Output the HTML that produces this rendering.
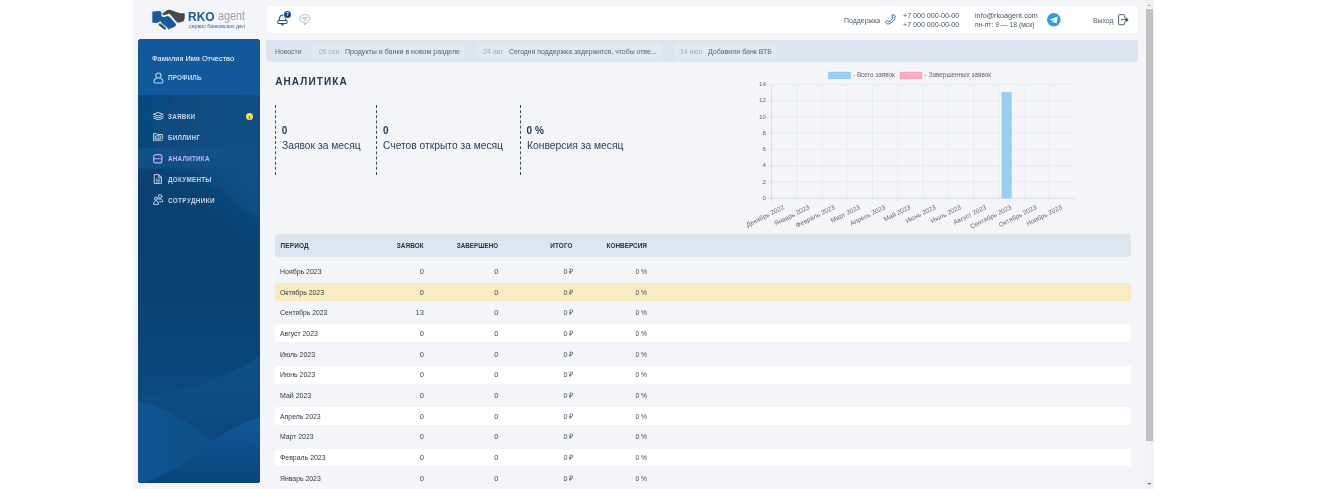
<!DOCTYPE html>
<html lang="ru"><head><meta charset="utf-8"><title>RKO agent — Аналитика</title>
<style>
*{margin:0;padding:0;box-sizing:border-box}
html,body{width:1340px;height:489px;overflow:hidden;background:#fff}
body{font-family:"Liberation Sans",sans-serif;position:relative}
.t{position:absolute;white-space:nowrap}
.a{position:absolute}
.bg{left:133.2px;top:0;width:1012.3px;height:489px;background:#f3f5f8}
.topbar{left:267px;top:6px;width:871.4px;height:26.8px;background:#fff;border-radius:2.5px}
.news{left:266.3px;top:39.8px;width:872.1px;height:22.7px;background:#dce4ed;border-radius:3px}
.pill{top:43.5px;height:15px;background:#e1e8ef;border:1px solid #e5ebf1;border-radius:2.5px}
.side{left:138.1px;top:39.1px;width:122.3px;height:444px;border-radius:3.5px;overflow:hidden;background:#0d4a80}
.th{left:274.9px;top:234.3px;width:855.7px;height:22.5px;background:#dde5ee;border-radius:3px}
.row{left:274.9px;width:855.7px;height:17.9px;border-radius:2px}
.dash{top:105px;width:0;height:69.5px;border-left:1px dashed #3a4c66}
.sb{left:1145.2px;top:0;width:8.5px;height:489px;background:#f1f1f1}
.thumb{left:1146.1px;top:8.9px;width:6.8px;height:432.3px;background:#c1c1c1}
svg{position:absolute;overflow:visible}
.txt{position:absolute;left:0;top:0;width:1340px;height:489px;will-change:transform}
</style></head>
<body>
<div class="a bg"></div>
<div class="a sb"></div>
<div class="a thumb"></div>
<svg style="left:1145.2px;top:0" width="8.5" height="489" viewBox="0 0 8.5 489"><path d="M2.9 5.9 L4.25 4.4 L5.6 5.9Z" fill="#8c8c8c"/><path d="M2.7 482.9 L4.25 484.7 L5.8 482.9Z" fill="#505050"/></svg>
<div class="a topbar"></div>
<div class="a news"></div>
<div class="a pill" style="left:312.5px;width:151.3px"></div>
<div class="a pill" style="left:476.9px;width:185.6px"></div>
<div class="a pill" style="left:675px;width:101px"></div>

<!-- sidebar -->
<div class="a side">
<svg style="left:0;top:0" width="122.3" height="444" viewBox="0 0 122.3 444" preserveAspectRatio="none">
<defs>
<linearGradient id="g1" x1="0" y1="0" x2="0" y2="1"><stop offset="0" stop-color="#0c4679"/><stop offset="0.35" stop-color="#0b4172"/><stop offset="0.6" stop-color="#0b4273"/><stop offset="0.8" stop-color="#0c497f"/><stop offset="1" stop-color="#0c497f"/></linearGradient>
<linearGradient id="g2" x1="0" y1="0" x2="1" y2="0.6"><stop offset="0" stop-color="#0f5189" stop-opacity=".25"/><stop offset="1" stop-color="#115892" stop-opacity=".75"/></linearGradient>
<linearGradient id="g3" gradientUnits="userSpaceOnUse" x1="0" y1="330" x2="0" y2="405"><stop offset="0" stop-color="#0e4f88"/><stop offset="1" stop-color="#0b467b"/></linearGradient>
<linearGradient id="g4" gradientUnits="userSpaceOnUse" x1="0" y1="0" x2="75" y2="0"><stop offset="0" stop-color="#0e5591"/><stop offset="1" stop-color="#0d4f89"/></linearGradient>
<linearGradient id="g6" gradientUnits="userSpaceOnUse" x1="0" y1="380" x2="0" y2="444"><stop offset="0" stop-color="#10599a"/><stop offset="1" stop-color="#0a4478"/></linearGradient>
<linearGradient id="g5" x1="0" y1="0" x2="1" y2="0"><stop offset="0" stop-color="#1a68ab" stop-opacity=".35"/><stop offset="1" stop-color="#1a68ab" stop-opacity="0"/></linearGradient>
<filter id="bl" x="-50%" y="-50%" width="200%" height="200%"><feGaussianBlur stdDeviation="14"/></filter>
</defs>
<rect x="0" y="0" width="122.3" height="444" fill="url(#g1)"/>
<path d="M-30 30 H160 V200 C100 180 50 110 -30 95Z" fill="url(#g2)" filter="url(#bl)"/>
<path d="M0 358 C40 356 85 341 122.3 317 V444 H0Z" fill="url(#g3)"/>
<path d="M0 362 C28 368 55 386 74.4 402.9 C55 419 35 433 11.7 442.1 L0 444Z" fill="url(#g4)"/>
<path d="M11.7 442.1 C39 430 56 416 74.4 402.9 C92 390 106 383 122.3 379 V444 H0Z" fill="url(#g6)"/>
<rect x="0" y="108.6" width="122.3" height="21" fill="url(#g5)"/>
<rect x="0" y="0" width="122.3" height="56" fill="#12599b"/>
</svg>
</div>

<!-- logo handshake -->
<svg style="left:151px;top:9px" width="35" height="22" viewBox="0 0 35 22">
<path d="M1.3 3.2 Q1.3 2.6 2 2.6 L8.6 2 Q10 2.2 10.6 4 Q10 6.6 11 7.4 Q12.6 8.6 14.4 7.8 L16.8 6.7 L19.9 9.3 L25.1 15.3 Q25 17 23.6 17.8 L17.1 20.5 L16.2 18.5 L11.3 14.8 L9.3 12.2 L6.2 13.9 L1.8 13.7 Q1.3 13.6 1.3 13Z" fill="#155c9e"/>
<path d="M11.4 4.6 L16.5 1.1 Q18 0.6 19.9 0.9 L24.5 2.7 L29.1 4.2 L33 4.3 Q33.8 4.4 33.8 5.4 Q34 9 32.9 12 L29.1 13.6 L26.2 13.6 L23.9 11 L20.5 6.7 L18.2 4.4 L15.9 5.6 L13 6.3 Q11.4 6.2 11.4 4.6Z" fill="#48474c" stroke="#f3f5f8" stroke-width=".7" paint-order="stroke"/>
<path d="M8.9 15.5 L13.7 19.4" stroke="#48474c" stroke-width="2.5" stroke-linecap="round" fill="none"/>
</svg>

<!-- sidebar icons -->
<svg style="left:152.7px;top:71.6px" width="10.9" height="12" viewBox="0 0 10.9 12" fill="none" stroke="#b9d7f2" stroke-width="1.05" stroke-linecap="round" stroke-linejoin="round">
<circle cx="5.45" cy="3.5" r="2.6"/><path d="M3.3 6.3 C1.6 7 0.8 8.2 0.8 9.6 C0.8 10.6 1.5 11 2.4 11 H8.5 C9.4 11 10.1 10.6 10.1 9.6 C10.1 8.2 9.3 7 7.6 6.3"/>
</svg>
<!-- ЗАЯВКИ: layers -->
<svg style="left:152.5px;top:112.1px" width="10.8" height="8.4" viewBox="0 0 10.8 8.4" fill="none" stroke="#c3d5ea" stroke-width="1" stroke-linejoin="round" stroke-linecap="round">
<path d="M5.4 0.6 L10.1 2.3 L5.4 4 L0.7 2.3Z"/><path d="M0.7 4.2 L5.4 5.9 L10.1 4.2"/><path d="M0.7 6.1 L5.4 7.8 L10.1 6.1"/>
</svg>
<!-- БИЛЛИНГ -->
<svg style="left:152.9px;top:133.3px" width="10" height="7.8" viewBox="0 0 10 7.8" fill="none" stroke="#c3d5ea" stroke-width="1" stroke-linejoin="round" stroke-linecap="round">
<path d="M0.6 7.2 V0.6 H3.4 L4.2 1.5 H9.4 V5.6"/><path d="M0.6 7.2 H9.4"/><rect x="2.7" y="2.9" width="4.6" height="2.9"/><circle cx="5" cy="4.35" r=".5" fill="#c3d5ea" stroke="none"/>
</svg>
<!-- АНАЛИТИКА -->
<svg style="left:153.1px;top:153.5px" width="9.6" height="9.6" viewBox="0 0 9.6 9.6" fill="none" stroke="#bdb0f5" stroke-width="1.15" stroke-linejoin="round" stroke-linecap="round">
<rect x="0.7" y="0.7" width="8.2" height="8.2" rx="2"/><path d="M0.7 4.8 H8.9"/>
</svg>
<!-- ДОКУМЕНТЫ -->
<svg style="left:154.1px;top:174.1px" width="8" height="10" viewBox="0 0 8 10" fill="none" stroke="#c3d5ea" stroke-width="1" stroke-linejoin="round" stroke-linecap="round">
<path d="M0.6 0.6 H4.8 L7.4 3.2 V9.4 H0.6Z"/><path d="M4.7 0.8 V3.3 H7.2"/><path d="M2.2 5 H5.8 M2.2 6.5 H5.8 M2.2 8 H5.8" stroke-width=".7"/>
</svg>
<!-- СОТРУДНИКИ -->
<svg style="left:152.8px;top:194.3px" width="10.4" height="10.6" viewBox="0 0 10.4 10.6" fill="none" stroke="#c3d5ea" stroke-width="1" stroke-linejoin="round" stroke-linecap="round">
<circle cx="7.1" cy="2.4" r="1.8"/><circle cx="3" cy="4.6" r="1.5"/><path d="M0.6 9.9 C0.6 7.6 1.6 6.7 3 6.7 C4.4 6.7 5.4 7.6 5.4 9.9Z"/><path d="M5.6 5 C7.8 4.4 9.8 5.4 9.8 7.8 H6.4"/>
</svg>
<div class="a" style="left:245.9px;top:113.2px;width:7.2px;height:7.2px;border-radius:50%;background:#f4e44c"></div>

<!-- topbar icons: bell -->
<svg style="left:276.6px;top:13.6px" width="12" height="12" viewBox="0 0 12 12" fill="none" stroke="#1e4f86" stroke-width="1.05" stroke-linejoin="round" stroke-linecap="round">
<path d="M2.2 6.2 C2.6 5 2.5 4.2 2.7 3.4 C3 1.6 4.2 0.9 5.4 0.9 C6.6 0.9 7.8 1.6 8.1 3.4 C8.3 4.2 8.2 5 8.6 6.2"/>
<rect x="0.8" y="6.5" width="9.3" height="2.9" rx="1.1"/>
<path d="M4.5 10.5 C4.9 11.2 5.9 11.2 6.3 10.5" stroke-width="1.2"/>
</svg>
<div class="a" style="left:283.7px;top:10.5px;width:7.6px;height:7.6px;border-radius:50%;background:#184b85;box-shadow:0 0 0 .7px #fff"></div>
<!-- chat -->
<svg style="left:299.2px;top:14.2px" width="12" height="12" viewBox="0 0 12 12" fill="none" stroke="#a4abb4" stroke-width=".8" stroke-linejoin="round" stroke-linecap="round">
<path d="M5.3 8.5 C2.4 8.4 0.7 6.6 0.7 4.5 C0.7 2.3 2.8 0.6 5.8 0.6 C8.8 0.6 10.9 2.3 10.9 4.5 C10.9 5.8 10.2 7 9 7.8 L5.8 10.7 Z"/>
<path d="M3.3 3.6 H8.5 M4.2 4.9 H7.6 M5.1 6.2 H6.7" stroke-width=".7"/>
</svg>
<!-- phone -->
<svg style="left:885px;top:14.2px" width="11.2" height="10.8" viewBox="0 0 22 21" fill="none" stroke="#2f6192" stroke-width="1.75" stroke-linejoin="round" stroke-linecap="round">
<path d="M15.4 1.6 C17.4 0.8 19.8 2.2 20.2 4.2 C19.6 10.8 15 16.6 8.6 19 C6 20 3 19.6 1.8 17.4 C1 15.6 2 13.6 4 13.4 C5.6 13.2 6.8 14 7.4 15.2 C11.6 13.4 14.4 10.2 15.8 6.4 C14.4 6 13.4 4.8 13.6 3.4 C13.8 2.4 14.4 1.8 15.4 1.6Z"/>
</svg>
<!-- telegram -->
<svg style="left:1047px;top:13px" width="13.6" height="13.6" viewBox="0 0 27 27">
<circle cx="13.5" cy="13.5" r="13.5" fill="#2d9fd9"/><path d="M5.6 13.2 L20.4 7.4 C21.2 7.1 21.7 7.6 21.5 8.5 L19 20 C18.8 20.8 18.2 21 17.6 20.6 L13.8 17.8 L11.9 19.6 C11.6 19.9 11.2 19.8 11.2 19.3 L11.5 16 L18 10.2 L10 15.2 L6 14 C5.2 13.8 5.1 13.4 5.6 13.2Z" fill="#fff"/>
</svg>
<!-- logout -->
<svg style="left:1117.6px;top:14.2px" width="10.8" height="11.4" viewBox="0 0 22 23" fill="none" stroke="#35516f" stroke-width="1.9" stroke-linejoin="round" stroke-linecap="round">
<path d="M13.4 6.6 V3 C13.4 1.8 12.8 1.2 11.6 1.2 H3 C1.8 1.2 1.2 1.8 1.2 3 V20 C1.2 21.2 1.8 21.8 3 21.8 H11.6 C12.8 21.8 13.4 21.2 13.4 20 V16.4"/><path d="M6.6 11.5 H17"/><path d="M16.6 7.8 L20.8 11.5 L16.6 15.2Z" fill="#35516f"/>
</svg>

<!-- stats dashes -->
<div class="a dash" style="left:274.8px"></div>
<div class="a dash" style="left:376.3px"></div>
<div class="a dash" style="left:519.5px"></div>

<!-- table -->
<div class="a th"></div>
<div class="a row" style="top:282.7px;background:#f9ecc1"></div>
<div class="a row" style="top:324.4px;background:#fff"></div>
<div class="a row" style="top:365.8px;background:#fff"></div>
<div class="a row" style="top:407.1px;background:#fff"></div>
<div class="a row" style="top:448.5px;background:#fff"></div>
<svg style="left:0;top:0;will-change:transform" width="1340" height="489" viewBox="0 0 1340 489" font-family="Liberation Sans, sans-serif">
<rect x="828.5" y="72.1" width="21.8" height="6.7" fill="#9bcdf2" stroke="#7fbdec" stroke-width=".5"/>
<rect x="900" y="72.1" width="21.8" height="6.7" fill="#f9adbf" stroke="#f58fa8" stroke-width=".5"/>
<text x="853" y="77.2" font-size="6.35" fill="#666">- Всего заявок</text>
<text x="924.8" y="77.2" font-size="6.35" fill="#666">- Завершенных заявок</text>
<path d="M767.5 84.50 H1074.6" stroke="#dfe2e6" stroke-width=".5" fill="none"/>
<text x="765.9" y="86.20" font-size="6.2" fill="#666" text-anchor="end">14</text>
<path d="M767.5 100.73 H1074.6" stroke="#dfe2e6" stroke-width=".5" fill="none"/>
<text x="765.9" y="102.43" font-size="6.2" fill="#666" text-anchor="end">12</text>
<path d="M767.5 116.96 H1074.6" stroke="#dfe2e6" stroke-width=".5" fill="none"/>
<text x="765.9" y="118.66" font-size="6.2" fill="#666" text-anchor="end">10</text>
<path d="M767.5 133.19 H1074.6" stroke="#dfe2e6" stroke-width=".5" fill="none"/>
<text x="765.9" y="134.89" font-size="6.2" fill="#666" text-anchor="end">8</text>
<path d="M767.5 149.41 H1074.6" stroke="#dfe2e6" stroke-width=".5" fill="none"/>
<text x="765.9" y="151.11" font-size="6.2" fill="#666" text-anchor="end">6</text>
<path d="M767.5 165.64 H1074.6" stroke="#dfe2e6" stroke-width=".5" fill="none"/>
<text x="765.9" y="167.34" font-size="6.2" fill="#666" text-anchor="end">4</text>
<path d="M767.5 181.87 H1074.6" stroke="#dfe2e6" stroke-width=".5" fill="none"/>
<text x="765.9" y="183.57" font-size="6.2" fill="#666" text-anchor="end">2</text>
<path d="M767.5 198.10 H1074.6" stroke="#c2c5c9" stroke-width=".5" fill="none"/>
<text x="765.9" y="199.80" font-size="6.2" fill="#666" text-anchor="end">0</text>
<path d="M771.50 84.5 V201.7" stroke="#c2c5c9" stroke-width=".5" fill="none"/>
<path d="M796.76 84.5 V201.7" stroke="#dfe2e6" stroke-width=".5" fill="none"/>
<path d="M822.02 84.5 V201.7" stroke="#dfe2e6" stroke-width=".5" fill="none"/>
<path d="M847.28 84.5 V201.7" stroke="#dfe2e6" stroke-width=".5" fill="none"/>
<path d="M872.54 84.5 V201.7" stroke="#dfe2e6" stroke-width=".5" fill="none"/>
<path d="M897.80 84.5 V201.7" stroke="#dfe2e6" stroke-width=".5" fill="none"/>
<path d="M923.06 84.5 V201.7" stroke="#dfe2e6" stroke-width=".5" fill="none"/>
<path d="M948.32 84.5 V201.7" stroke="#dfe2e6" stroke-width=".5" fill="none"/>
<path d="M973.58 84.5 V201.7" stroke="#dfe2e6" stroke-width=".5" fill="none"/>
<path d="M998.84 84.5 V201.7" stroke="#dfe2e6" stroke-width=".5" fill="none"/>
<path d="M1024.10 84.5 V201.7" stroke="#dfe2e6" stroke-width=".5" fill="none"/>
<path d="M1049.36 84.5 V201.7" stroke="#dfe2e6" stroke-width=".5" fill="none"/>
<rect x="1002.0" y="92.4" width="9.2" height="105.7" fill="#9bcdf2" stroke="#82bfee" stroke-width=".5"/>
<text transform="translate(782.83 204.90) rotate(-26.5)" font-size="6.5" fill="#666" text-anchor="end" y="4.2">Декабрь 2022</text>
<text transform="translate(808.09 204.90) rotate(-26.5)" font-size="6.5" fill="#666" text-anchor="end" y="4.2">Январь 2023</text>
<text transform="translate(833.35 204.90) rotate(-26.5)" font-size="6.5" fill="#666" text-anchor="end" y="4.2">Февраль 2023</text>
<text transform="translate(858.61 204.90) rotate(-26.5)" font-size="6.5" fill="#666" text-anchor="end" y="4.2">Март 2023</text>
<text transform="translate(883.87 204.90) rotate(-26.5)" font-size="6.5" fill="#666" text-anchor="end" y="4.2">Апрель 2023</text>
<text transform="translate(909.13 204.90) rotate(-26.5)" font-size="6.5" fill="#666" text-anchor="end" y="4.2">Май 2023</text>
<text transform="translate(934.39 204.90) rotate(-26.5)" font-size="6.5" fill="#666" text-anchor="end" y="4.2">Июнь 2023</text>
<text transform="translate(959.65 204.90) rotate(-26.5)" font-size="6.5" fill="#666" text-anchor="end" y="4.2">Июль 2023</text>
<text transform="translate(984.91 204.90) rotate(-26.5)" font-size="6.5" fill="#666" text-anchor="end" y="4.2">Август 2023</text>
<text transform="translate(1010.17 204.90) rotate(-26.5)" font-size="6.5" fill="#666" text-anchor="end" y="4.2">Сентябрь 2023</text>
<text transform="translate(1035.43 204.90) rotate(-26.5)" font-size="6.5" fill="#666" text-anchor="end" y="4.2">Октябрь 2023</text>
<text transform="translate(1060.69 204.90) rotate(-26.5)" font-size="6.5" fill="#666" text-anchor="end" y="4.2">Ноябрь 2023</text>
</svg>

<!-- text -->
<div class="txt">
<div class="t" style="top:10px;font-size:12.3px;line-height:14px;color:#17599a;font-weight:700;left:188.40px;transform:scaleX(0.9734);transform-origin:0 0;">RKO</div>
<div class="t" style="top:9px;font-size:12.4px;line-height:14px;color:#a0a0a4;left:217.80px;transform:scaleX(0.8705);transform-origin:0 0;">agent</div>
<div class="t" style="top:23px;font-size:5.4px;line-height:6px;color:#2a6cab;left:188.60px;transform:scaleX(0.9774);transform-origin:0 0;">сервис банковских дел</div>
<div class="t" style="top:54px;font-size:7.9px;line-height:9px;color:#ffffff;left:151.90px;transform:scaleX(0.9365);transform-origin:0 0;">Фамилия Имя Отчество</div>
<div class="t" style="top:74px;font-size:6.3px;line-height:7px;color:#c0d9f0;font-weight:700;letter-spacing:0.185px;left:168.00px;">ПРОФИЛЬ</div>
<div class="t" style="top:113px;font-size:6.3px;line-height:7px;color:#c3d5ea;font-weight:700;letter-spacing:0.212px;left:168.00px;">ЗАЯВКИ</div>
<div class="t" style="top:134px;font-size:6.3px;line-height:7px;color:#c3d5ea;font-weight:700;letter-spacing:0.242px;left:168.00px;">БИЛЛИНГ</div>
<div class="t" style="top:155px;font-size:6.3px;line-height:7px;color:#c3b7f8;font-weight:700;letter-spacing:0.258px;left:168.00px;">АНАЛИТИКА</div>
<div class="t" style="top:176px;font-size:6.3px;line-height:7px;color:#c3d5ea;font-weight:700;letter-spacing:0.273px;left:168.00px;">ДОКУМЕНТЫ</div>
<div class="t" style="top:197px;font-size:6.3px;line-height:7px;color:#c3d5ea;font-weight:700;letter-spacing:0.413px;left:168.00px;">СОТРУДНИКИ</div>
<div class="t" style="top:115px;font-size:4.2px;line-height:5px;color:#5a4a00;font-weight:700;left:229.30px;width:40px;text-align:center;">1</div>
<div class="t" style="top:12px;font-size:4.8px;line-height:5px;color:#dfe9f5;font-weight:700;left:267.60px;width:40px;text-align:center;">7</div>
<div class="t" style="top:16px;font-size:7.3px;line-height:9px;color:#4d5c70;left:844.40px;transform:scaleX(0.9507);transform-origin:0 0;">Поддержка</div>
<div class="t" style="top:11px;font-size:7.4px;line-height:9px;color:#44546a;left:902.80px;transform:scaleX(0.9597);transform-origin:0 0;">+7 000 000-00-00</div>
<div class="t" style="top:20px;font-size:7.4px;line-height:9px;color:#44546a;left:902.80px;transform:scaleX(0.9597);transform-origin:0 0;">+7 000 000-00-00</div>
<div class="t" style="top:11px;font-size:7.4px;line-height:9px;color:#44546a;left:975.00px;transform:scaleX(0.9781);transform-origin:0 0;">info@rkoagent.com</div>
<div class="t" style="top:20px;font-size:7.4px;line-height:9px;color:#44546a;left:975.00px;transform:scaleX(0.9158);transform-origin:0 0;">пн-пт: 9 — 18 (мск)</div>
<div class="t" style="top:16px;font-size:7.4px;line-height:9px;color:#4d5c70;left:1093.00px;transform:scaleX(0.9266);transform-origin:0 0;">Выход</div>
<div class="t" style="top:47px;font-size:7.3px;line-height:9px;color:#5d6979;left:274.80px;transform:scaleX(0.9381);transform-origin:0 0;">Новости</div>
<div class="t" style="top:47px;font-size:7.3px;line-height:9px;color:#a3adba;left:318.80px;transform:scaleX(0.9228);transform-origin:0 0;">06 сен</div>
<div class="t" style="top:47px;font-size:7.3px;line-height:9px;color:#566274;left:344.80px;transform:scaleX(0.9664);transform-origin:0 0;">Продукты и банки в новом разделе</div>
<div class="t" style="top:47px;font-size:7.3px;line-height:9px;color:#a3adba;left:483.00px;transform:scaleX(0.9639);transform-origin:0 0;">24 авг</div>
<div class="t" style="top:47px;font-size:7.3px;line-height:9px;color:#566274;left:508.50px;transform:scaleX(0.9443);transform-origin:0 0;">Сегодня поддержка задержится, чтобы отве...</div>
<div class="t" style="top:47px;font-size:7.3px;line-height:9px;color:#a3adba;left:680.00px;transform:scaleX(0.9455);transform-origin:0 0;">14 июл</div>
<div class="t" style="top:47px;font-size:7.3px;line-height:9px;color:#566274;left:707.50px;transform:scaleX(0.9635);transform-origin:0 0;">Добавили банк ВТБ</div>
<div class="t" style="top:76px;font-size:10.0px;line-height:11px;color:#1d3557;font-weight:700;letter-spacing:1.109px;left:275.20px;">АНАЛИТИКА</div>
<div class="t" style="top:125px;font-size:10px;line-height:11px;color:#1d3557;font-weight:700;letter-spacing:0.037px;left:281.80px;">0</div>
<div class="t" style="top:140px;font-size:10.4px;line-height:11px;color:#2b3f58;left:281.80px;transform:scaleX(0.9909);transform-origin:0 0;">Заявок за месяц</div>
<div class="t" style="top:125px;font-size:10px;line-height:11px;color:#1d3557;font-weight:700;letter-spacing:0.037px;left:383.00px;">0</div>
<div class="t" style="top:140px;font-size:10.4px;line-height:11px;color:#2b3f58;left:383.00px;transform:scaleX(0.9868);transform-origin:0 0;">Счетов открыто за месяц</div>
<div class="t" style="top:125px;font-size:10px;line-height:11px;color:#1d3557;font-weight:700;letter-spacing:0.133px;left:526.50px;">0 %</div>
<div class="t" style="top:140px;font-size:10.4px;line-height:11px;color:#2b3f58;left:526.50px;transform:scaleX(0.9931);transform-origin:0 0;">Конверсия за месяц</div>
<div class="t" style="top:242px;font-size:6.4px;line-height:7px;color:#2a2f38;font-weight:700;letter-spacing:0.189px;left:280.50px;">ПЕРИОД</div>
<div class="t" style="top:242px;font-size:6.4px;line-height:7px;color:#2a2f38;font-weight:700;letter-spacing:0.051px;right:916.35px;">ЗАЯВОК</div>
<div class="t" style="top:242px;font-size:6.4px;line-height:7px;color:#2a2f38;font-weight:700;right:841.90px;transform:scaleX(0.9802);transform-origin:100% 0;">ЗАВЕРШЕНО</div>
<div class="t" style="top:242px;font-size:6.4px;line-height:7px;color:#2a2f38;font-weight:700;letter-spacing:0.093px;right:767.41px;">ИТОГО</div>
<div class="t" style="top:242px;font-size:6.4px;line-height:7px;color:#2a2f38;font-weight:700;letter-spacing:0.015px;right:693.09px;">КОНВЕРСИЯ</div>
<div class="t" style="top:267px;font-size:7.5px;line-height:9px;color:#32373f;left:280.30px;transform:scaleX(0.9286);transform-origin:0 0;">Ноябрь 2023</div>
<div class="t" style="top:267px;font-size:7.5px;line-height:9px;color:#434a54;right:916.10px;">0</div>
<div class="t" style="top:267px;font-size:7.5px;line-height:9px;color:#434a54;right:841.70px;">0</div>
<div class="t" style="top:267px;font-size:7.5px;line-height:9px;color:#434a54;right:767.20px;transform:scaleX(0.9546);transform-origin:100% 0;">0 ₽</div>
<div class="t" style="top:267px;font-size:7.5px;line-height:9px;color:#434a54;right:692.90px;transform:scaleX(0.8889);transform-origin:100% 0;">0 %</div>
<div class="t" style="top:288px;font-size:7.5px;line-height:9px;color:#32373f;left:280.30px;transform:scaleX(0.9197);transform-origin:0 0;">Октябрь 2023</div>
<div class="t" style="top:288px;font-size:7.5px;line-height:9px;color:#434a54;right:916.10px;">0</div>
<div class="t" style="top:288px;font-size:7.5px;line-height:9px;color:#434a54;right:841.70px;">0</div>
<div class="t" style="top:288px;font-size:7.5px;line-height:9px;color:#434a54;right:767.20px;transform:scaleX(0.9546);transform-origin:100% 0;">0 ₽</div>
<div class="t" style="top:288px;font-size:7.5px;line-height:9px;color:#434a54;right:692.90px;transform:scaleX(0.8889);transform-origin:100% 0;">0 %</div>
<div class="t" style="top:308px;font-size:7.5px;line-height:9px;color:#32373f;left:280.30px;transform:scaleX(0.9031);transform-origin:0 0;">Сентябрь 2023</div>
<div class="t" style="top:308px;font-size:7.5px;line-height:9px;color:#434a54;right:916.10px;">13</div>
<div class="t" style="top:308px;font-size:7.5px;line-height:9px;color:#434a54;right:841.70px;">0</div>
<div class="t" style="top:308px;font-size:7.5px;line-height:9px;color:#434a54;right:767.20px;transform:scaleX(0.9546);transform-origin:100% 0;">0 ₽</div>
<div class="t" style="top:308px;font-size:7.5px;line-height:9px;color:#434a54;right:692.90px;transform:scaleX(0.8889);transform-origin:100% 0;">0 %</div>
<div class="t" style="top:329px;font-size:7.5px;line-height:9px;color:#32373f;left:280.30px;transform:scaleX(0.9143);transform-origin:0 0;">Август 2023</div>
<div class="t" style="top:329px;font-size:7.5px;line-height:9px;color:#434a54;right:916.10px;">0</div>
<div class="t" style="top:329px;font-size:7.5px;line-height:9px;color:#434a54;right:841.70px;">0</div>
<div class="t" style="top:329px;font-size:7.5px;line-height:9px;color:#434a54;right:767.20px;transform:scaleX(0.9546);transform-origin:100% 0;">0 ₽</div>
<div class="t" style="top:329px;font-size:7.5px;line-height:9px;color:#434a54;right:692.90px;transform:scaleX(0.8889);transform-origin:100% 0;">0 %</div>
<div class="t" style="top:350px;font-size:7.5px;line-height:9px;color:#32373f;left:280.30px;transform:scaleX(0.9233);transform-origin:0 0;">Июль 2023</div>
<div class="t" style="top:350px;font-size:7.5px;line-height:9px;color:#434a54;right:916.10px;">0</div>
<div class="t" style="top:350px;font-size:7.5px;line-height:9px;color:#434a54;right:841.70px;">0</div>
<div class="t" style="top:350px;font-size:7.5px;line-height:9px;color:#434a54;right:767.20px;transform:scaleX(0.9546);transform-origin:100% 0;">0 ₽</div>
<div class="t" style="top:350px;font-size:7.5px;line-height:9px;color:#434a54;right:692.90px;transform:scaleX(0.8889);transform-origin:100% 0;">0 %</div>
<div class="t" style="top:370px;font-size:7.5px;line-height:9px;color:#32373f;left:280.30px;transform:scaleX(0.9275);transform-origin:0 0;">Июнь 2023</div>
<div class="t" style="top:370px;font-size:7.5px;line-height:9px;color:#434a54;right:916.10px;">0</div>
<div class="t" style="top:370px;font-size:7.5px;line-height:9px;color:#434a54;right:841.70px;">0</div>
<div class="t" style="top:370px;font-size:7.5px;line-height:9px;color:#434a54;right:767.20px;transform:scaleX(0.9546);transform-origin:100% 0;">0 ₽</div>
<div class="t" style="top:370px;font-size:7.5px;line-height:9px;color:#434a54;right:692.90px;transform:scaleX(0.8889);transform-origin:100% 0;">0 %</div>
<div class="t" style="top:391px;font-size:7.5px;line-height:9px;color:#32373f;left:280.30px;transform:scaleX(0.9322);transform-origin:0 0;">Май 2023</div>
<div class="t" style="top:391px;font-size:7.5px;line-height:9px;color:#434a54;right:916.10px;">0</div>
<div class="t" style="top:391px;font-size:7.5px;line-height:9px;color:#434a54;right:841.70px;">0</div>
<div class="t" style="top:391px;font-size:7.5px;line-height:9px;color:#434a54;right:767.20px;transform:scaleX(0.9546);transform-origin:100% 0;">0 ₽</div>
<div class="t" style="top:391px;font-size:7.5px;line-height:9px;color:#434a54;right:692.90px;transform:scaleX(0.8889);transform-origin:100% 0;">0 %</div>
<div class="t" style="top:412px;font-size:7.5px;line-height:9px;color:#32373f;left:280.30px;transform:scaleX(0.9204);transform-origin:0 0;">Апрель 2023</div>
<div class="t" style="top:412px;font-size:7.5px;line-height:9px;color:#434a54;right:916.10px;">0</div>
<div class="t" style="top:412px;font-size:7.5px;line-height:9px;color:#434a54;right:841.70px;">0</div>
<div class="t" style="top:412px;font-size:7.5px;line-height:9px;color:#434a54;right:767.20px;transform:scaleX(0.9546);transform-origin:100% 0;">0 ₽</div>
<div class="t" style="top:412px;font-size:7.5px;line-height:9px;color:#434a54;right:692.90px;transform:scaleX(0.8889);transform-origin:100% 0;">0 %</div>
<div class="t" style="top:432px;font-size:7.5px;line-height:9px;color:#32373f;left:280.30px;transform:scaleX(0.9123);transform-origin:0 0;">Март 2023</div>
<div class="t" style="top:432px;font-size:7.5px;line-height:9px;color:#434a54;right:916.10px;">0</div>
<div class="t" style="top:432px;font-size:7.5px;line-height:9px;color:#434a54;right:841.70px;">0</div>
<div class="t" style="top:432px;font-size:7.5px;line-height:9px;color:#434a54;right:767.20px;transform:scaleX(0.9546);transform-origin:100% 0;">0 ₽</div>
<div class="t" style="top:432px;font-size:7.5px;line-height:9px;color:#434a54;right:692.90px;transform:scaleX(0.8889);transform-origin:100% 0;">0 %</div>
<div class="t" style="top:453px;font-size:7.5px;line-height:9px;color:#32373f;left:280.30px;transform:scaleX(0.9256);transform-origin:0 0;">Февраль 2023</div>
<div class="t" style="top:453px;font-size:7.5px;line-height:9px;color:#434a54;right:916.10px;">0</div>
<div class="t" style="top:453px;font-size:7.5px;line-height:9px;color:#434a54;right:841.70px;">0</div>
<div class="t" style="top:453px;font-size:7.5px;line-height:9px;color:#434a54;right:767.20px;transform:scaleX(0.9546);transform-origin:100% 0;">0 ₽</div>
<div class="t" style="top:453px;font-size:7.5px;line-height:9px;color:#434a54;right:692.90px;transform:scaleX(0.8889);transform-origin:100% 0;">0 %</div>
<div class="t" style="top:474px;font-size:7.5px;line-height:9px;color:#32373f;left:280.30px;transform:scaleX(0.9149);transform-origin:0 0;">Январь 2023</div>
<div class="t" style="top:474px;font-size:7.5px;line-height:9px;color:#434a54;right:916.10px;">0</div>
<div class="t" style="top:474px;font-size:7.5px;line-height:9px;color:#434a54;right:841.70px;">0</div>
<div class="t" style="top:474px;font-size:7.5px;line-height:9px;color:#434a54;right:767.20px;transform:scaleX(0.9546);transform-origin:100% 0;">0 ₽</div>
<div class="t" style="top:474px;font-size:7.5px;line-height:9px;color:#434a54;right:692.90px;transform:scaleX(0.8889);transform-origin:100% 0;">0 %</div>
</div>
</body></html>
